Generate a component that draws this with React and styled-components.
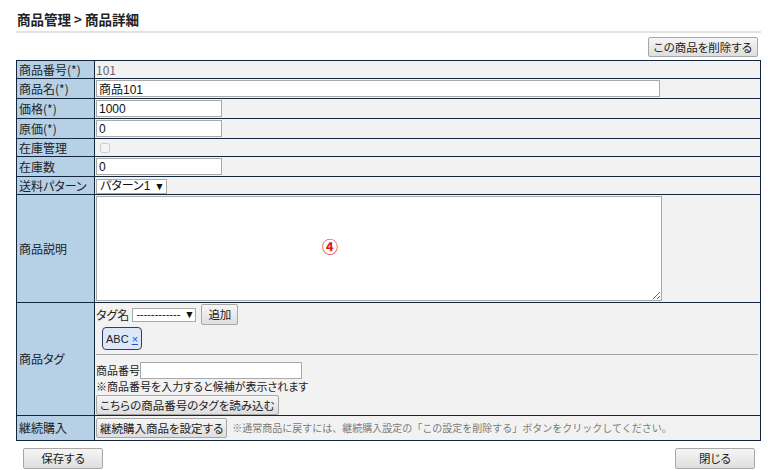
import styled, { createGlobalStyle } from "styled-components";

const GlobalStyle = createGlobalStyle`
  body {
    margin: 0;
    background: #ffffff;
    font-family: "Noto Sans CJK JP", "Liberation Sans", sans-serif;
    font-size: 12px;
    font-feature-settings: "palt";
    color: #222;
  }
`;

const Page = styled.div`
  width: 745px;
  padding: 9px 0 0 16px;
`;

const Title = styled.h1`
  margin: 0;
  font-size: 13.5px;
  font-weight: bold;
  line-height: 20px;
  padding-left: 1px;
  border-bottom: 2px solid #e2e2e2;
  padding-bottom: 2px;
`;

const Toolbar = styled.div`
  display: flex;
  justify-content: flex-end;
  padding: 4px 3px 3px 0;
`;

const Button = styled.button`
  display: block;
  font-family: inherit;
  font-size: 11.5px;
  font-feature-settings: "palt";
  line-height: 15px;
  height: ${({ $h }) => $h || 20}px;
  min-width: ${({ $w }) => ($w ? `${$w}px` : "auto")};
  padding: 0 ${({ $px }) => ($px === undefined ? 5 : $px)}px;
  color: #222;
  background: linear-gradient(#f6f6f6, #dedede);
  border: 1px solid #a7a7a7;
  border-radius: 2px;
  white-space: nowrap;
  cursor: pointer;
`;

const Table = styled.table`
  width: 100%;
  border-collapse: collapse;
  border: 1.5px solid #14263d;
`;

const Label = styled.th`
  width: 73px;
  padding: 0 2px;
  text-align: left;
  font-weight: normal;
  background: #b6d0e6;
  border: 1px solid #14263d;
  height: ${({ $h }) => $h || 17}px;
  line-height: 14px;
  white-space: nowrap;
`;

const Cell = styled.td`
  background: #f2f2f2;
  border: 1px solid #14263d;
  padding: ${({ $pad }) => $pad || "0 1px"};
  line-height: 14px;
  color: ${({ $muted }) => ($muted ? "#666" : "#222")};
`;

const TextInput = styled.input`
  display: block;
  box-sizing: border-box;
  width: ${({ $w }) => $w}px;
  height: 17px;
  padding: 0 2px;
  border: 1px solid #a9a9a9;
  background: #fff;
  font-family: "Liberation Sans", "Noto Sans CJK JP", sans-serif;
  font-size: 12px;
  color: #111;
`;

const Check = styled.input`
  display: block;
  width: 10px;
  height: 10px;
  margin: 3px 4px;
`;

const FakeSelect = styled.span`
  display: inline-flex;
  align-items: center;
  justify-content: space-between;
  gap: 4px;
  box-sizing: border-box;
  width: ${({ $w }) => $w}px;
  height: ${({ $h }) => $h || 15}px;
  padding: 0 3px;
  border: 1px solid #a9a9a9;
  background: #fff;
  font-family: "Liberation Sans", "Noto Sans CJK JP", sans-serif;
  font-size: ${({ $fs }) => $fs || 12}px;
  line-height: 13px;
  color: #111;
  white-space: nowrap;
  overflow: hidden;

  small {
    font-size: 10.5px;
  }
`;

const AreaWrap = styled.div`
  position: relative;
  width: 566px;
  padding: 1px 0;
`;

const Area = styled.textarea`
  display: block;
  box-sizing: border-box;
  width: 566px;
  height: 105px;
  border: 1px solid #a9a9a9;
  background: #fff;
`;

const Marker = styled.span`
  position: absolute;
  left: 226px;
  top: 44px;
  color: #e01818;
  font-size: 16px;
  font-weight: bold;
  pointer-events: none;
`;

const TagTop = styled.div`
  padding: 1px 0 0 0;
`;

const TagLine = styled.div`
  display: flex;
  align-items: center;
  gap: 3px;
  height: 21px;

  button {
    margin-left: 2px;
  }
`;

const Chip = styled.span`
  display: inline-flex;
  align-items: center;
  gap: 3px;
  margin: 2px 0 4px 6px;
  padding: 0 3px;
  height: 21px;
  font-family: "Liberation Sans", "Noto Sans CJK JP", sans-serif;
  font-size: 11px;
  border: 1px solid #2c3f5e;
  border-radius: 4px;
  background: #dce8fa;

  a {
    color: #2850c8;
    text-decoration: underline;
  }
`;

const TagBottom = styled.div`
  border-top: 1px solid #a5a5a5;
  margin-right: 2px;
  padding: 7px 0 0;
  font-size: 11px;
`;

const InlineRow = styled.div`
  display: flex;
  align-items: center;
  height: 16px;
`;

const Hint = styled.div`
  line-height: 16px;
  margin-bottom: 1px;
`;

const BuyCell = styled.div`
  display: flex;
  align-items: center;
  gap: 5px;
  padding: 2px 0;
`;

const Note = styled.span`
  font-size: 10px;
  font-feature-settings: normal;
  color: #7a7a7a;
`;

const Footer = styled.div`
  display: flex;
  justify-content: space-between;
  padding: 7px 6px 0 7px;
`;

function App() {
  return (
    <Page>
      <GlobalStyle />
      <Title>商品管理 &gt; 商品詳細</Title>
      <Toolbar>
        <Button>この商品を削除する</Button>
      </Toolbar>
      <Table>
        <tbody>
          <tr>
            <Label>商品番号(*)</Label>
            <Cell $muted>101</Cell>
          </tr>
          <tr>
            <Label $h={19}>商品名(*)</Label>
            <Cell>
              <TextInput $w={564} defaultValue="商品101" />
            </Cell>
          </tr>
          <tr>
            <Label $h={19}>価格(*)</Label>
            <Cell>
              <TextInput $w={126} defaultValue="1000" />
            </Cell>
          </tr>
          <tr>
            <Label $h={19}>原価(*)</Label>
            <Cell>
              <TextInput $w={126} defaultValue="0" />
            </Cell>
          </tr>
          <tr>
            <Label>在庫管理</Label>
            <Cell>
              <Check type="checkbox" disabled />
            </Cell>
          </tr>
          <tr>
            <Label $h={19}>在庫数</Label>
            <Cell>
              <TextInput $w={126} defaultValue="0" />
            </Cell>
          </tr>
          <tr>
            <Label>送料パターン</Label>
            <Cell>
              <FakeSelect $w={71}>
                パターン1 <small>▼</small>
              </FakeSelect>
            </Cell>
          </tr>
          <tr>
            <Label $h={107}>商品説明</Label>
            <Cell>
              <AreaWrap>
                <Area />
                <Marker>④</Marker>
              </AreaWrap>
            </Cell>
          </tr>
          <tr>
            <Label>商品タグ</Label>
            <Cell $pad="0 0 0 1px">
              <TagTop>
                <TagLine>
                  タグ名
                  <FakeSelect $w={64} $h={14} $fs={11}>
                    ------------ <small>▼</small>
                  </FakeSelect>
                  <Button $h={21} $px={6}>追加</Button>
                </TagLine>
                <Chip>
                  ABC <a>×</a>
                </Chip>
              </TagTop>
              <TagBottom>
                <InlineRow>
                  商品番号
                  <TextInput $w={162} />
                </InlineRow>
                <Hint>※商品番号を入力すると候補が表示されます</Hint>
                <Button $px={3}>こちらの商品番号のタグを読み込む</Button>
              </TagBottom>
            </Cell>
          </tr>
          <tr>
            <Label>継続購入</Label>
            <Cell>
              <BuyCell>
                <Button $px={3}>継続購入商品を設定する</Button>
                <Note>
                  ※通常商品に戻すには、継続購入設定の「この設定を削除する」ボタンをクリックしてください。
                </Note>
              </BuyCell>
            </Cell>
          </tr>
        </tbody>
      </Table>
      <Footer>
        <Button $w={80} $h={21}>保存する</Button>
        <Button $w={80} $h={21}>閉じる</Button>
      </Footer>
    </Page>
  );
}

export default App;
